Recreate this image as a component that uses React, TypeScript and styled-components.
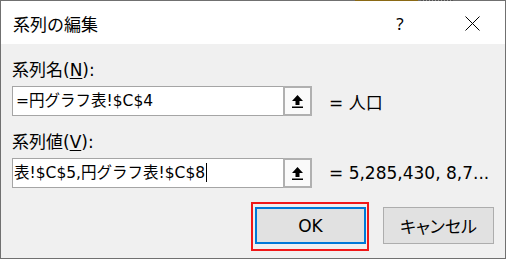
import React from 'react'
import styled, { createGlobalStyle } from 'styled-components'

const GlobalStyle = createGlobalStyle`
  html, body {
    margin: 0;
    padding: 0;
    background: #f0f0f0;
  }
  body {
    font-family: "DejaVu Sans", "Noto Sans CJK JP", sans-serif;
    color: #000;
  }
  * {
    box-sizing: border-box;
  }
`

const Window = styled.div`
  width: 506px;
  height: 259px;
  display: flex;
  flex-direction: column;
  border: 1px solid #707070;
  border-top: none;
  background: #f0f0f0;
`

// the excel window behind peeks through the top edge
const TopEdge = styled.div`
  height: 1px;
  margin: 0 -1px;
  background:
    linear-gradient(to right, transparent 0 355px, #8a6914 355px 418px, transparent 418px),
    repeating-linear-gradient(to right, #555 0 2px, #9a9a9a 2px 3px) 421px 0 / 32px 1px no-repeat,
    #707070;
`

const TitleBar = styled.div`
  height: 43px;
  background: #fff;
  display: flex;
  align-items: center;
  padding-left: 12px;
  padding-right: 10px;
`

const Title = styled.div`
  flex: 1;
  font-size: 17px;
  padding-top: 2px;
`

const TitleButton = styled.div<{ $gap?: number }>`
  width: 46px;
  height: 100%;
  display: flex;
  align-items: center;
  justify-content: center;
  margin-left: ${({ $gap }) => $gap ?? 0}px;
  font-family: "Noto Sans", sans-serif;
  font-size: 17px;
  padding-top: 1px;
`

const Body = styled.div`
  flex: 1;
  display: flex;
  flex-direction: column;
  padding: 0 11px;
`

const Label = styled.div<{ $top: number }>`
  margin-top: ${({ $top }) => $top}px;
  font-size: 17px;
  line-height: 22px;
  height: 22px;

  u {
    text-decoration: underline;
    text-underline-offset: 2px;
    text-decoration-thickness: 1px;
  }
`

const FieldRow = styled.div`
  display: flex;
  align-items: center;
  gap: 17px;
  margin-top: 5px;
`

const FieldBox = styled.div`
  width: 300px;
  height: 30px;
  border: 1px solid #a5a5a5;
  background: #fff;
  display: flex;
`

const FieldText = styled.div<{ $pad: number }>`
  flex: 1;
  overflow: hidden;
  white-space: nowrap;
  font-size: 15.5px;
  line-height: 28px;
  padding-left: ${({ $pad }) => $pad}px;
`

const Caret = styled.span`
  display: inline-block;
  width: 1px;
  height: 19px;
  background: #000;
  margin-left: 1px;
  vertical-align: -4px;
`

const RefButton = styled.div`
  width: 29px;
  margin: -1px -1px -1px 0;
  border: 2px solid #b0b0b0;
  background: #fafafa;
  display: flex;
  align-items: center;
  justify-content: center;
`

const Result = styled.div`
  font-size: 17px;
  white-space: nowrap;
`

const ButtonRow = styled.div`
  display: flex;
  justify-content: flex-end;
  gap: 17px;
  margin-top: 19px;
`

const DialogButton = styled.div<{ $primary?: boolean }>`
  position: relative;
  width: 111px;
  height: 37px;
  display: flex;
  align-items: center;
  justify-content: center;
  background: #e1e1e1;
  border: ${({ $primary }) => ($primary ? '2px solid #0078d7' : '1px solid #adadad')};
  font-size: 17px;
  font-feature-settings: "palt";
`

// red annotation box drawn over the screenshot
const Highlight = styled.div`
  position: absolute;
  left: -6px;
  right: -5px;
  top: -7px;
  bottom: -9px;
  border: 2px solid #f01818;
  pointer-events: none;
`

function RefArrow() {
  return (
    <svg width="11" height="13" viewBox="0 0 11 13">
      <path d="M5.5 0 L11 6 L7.5 6 L7.5 10 L3.5 10 L3.5 6 L0 6 Z" fill="#000" />
      <rect x="0" y="11.5" width="11" height="1.5" fill="#000" />
    </svg>
  )
}

function CloseIcon() {
  return (
    <svg width="15" height="15" viewBox="0 0 15 15">
      <path d="M0.5 0.5 L14.5 14.5 M14.5 0.5 L0.5 14.5" stroke="#000" strokeWidth="1" />
    </svg>
  )
}

export default function App() {
  return (
    <>
      <GlobalStyle />
      <Window>
        <TopEdge />
        <TitleBar>
          <Title>系列の編集</Title>
          <TitleButton>?</TitleButton>
          <TitleButton $gap={26}>
            <CloseIcon />
          </TitleButton>
        </TitleBar>
        <Body>
          <Label $top={15}>
            系列名(<u>N</u>):
          </Label>
          <FieldRow>
            <FieldBox>
              <FieldText $pad={3}>=円グラフ表!$C$4</FieldText>
              <RefButton>
                <RefArrow />
              </RefButton>
            </FieldBox>
            <Result>= 人口</Result>
          </FieldRow>
          <Label $top={15}>
            系列値(<u>V</u>):
          </Label>
          <FieldRow>
            <FieldBox>
              <FieldText $pad={1}>
                表!$C$5,円グラフ表!$C$8
                <Caret />
              </FieldText>
              <RefButton>
                <RefArrow />
              </RefButton>
            </FieldBox>
            <Result>= 5,285,430, 8,7...</Result>
          </FieldRow>
          <ButtonRow>
            <DialogButton $primary>
              OK
              <Highlight />
            </DialogButton>
            <DialogButton>キャンセル</DialogButton>
          </ButtonRow>
        </Body>
      </Window>
    </>
  )
}
